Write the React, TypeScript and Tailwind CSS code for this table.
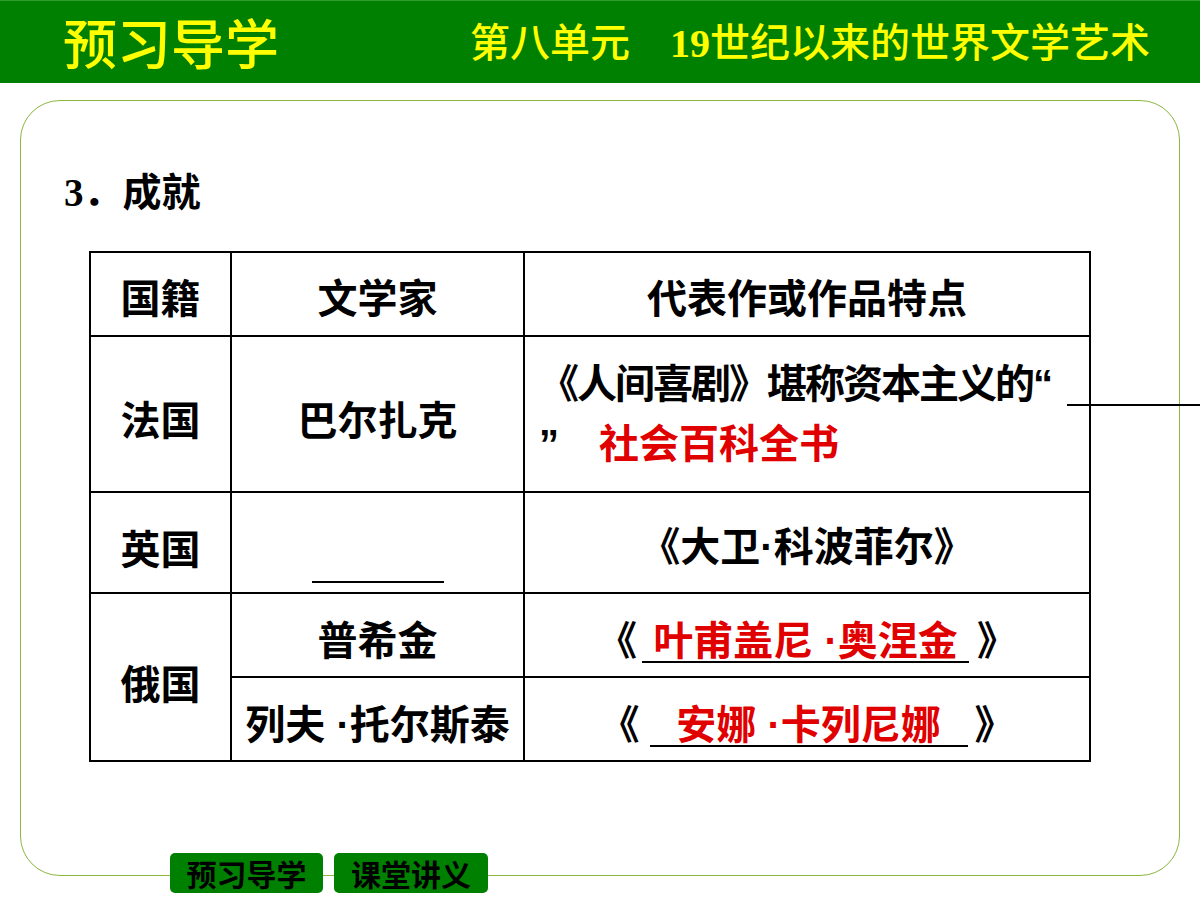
const cjk = "font-['Noto_Sans_CJK_SC','Liberation_Sans',sans-serif]";
const mixed = "font-['Liberation_Sans','Noto_Sans_CJK_SC',sans-serif]";

function Blank({ children, width }: { children?: React.ReactNode; width: string }) {
  return (
    <span
      className={`inline-block border-b-2 border-black text-center leading-[40px] text-[#e00000] ${width}`}
    >
      {children}
    </span>
  );
}

export default function App() {
  return (
    <div className={`flex h-[900px] w-[1200px] flex-col overflow-hidden bg-white ${cjk}`}>
      {/* top bar */}
      <header className="flex h-[83px] items-center border-t border-[#2f9e2f] bg-[#008000] text-[#ffff00]">
        <span className="pl-[63px] text-[54px] font-medium leading-none">预习导学</span>
        <div className="ml-auto flex items-baseline pr-[50px] text-[40px] font-medium leading-none">
          <span>第八单元</span>
          <span className="ml-[40px] font-['Liberation_Serif',serif] font-bold">19</span>
          <span>世纪以来的世界文学艺术</span>
        </div>
      </header>

      <div className="px-[20px] pt-[17px]">
        <div className="h-[776px] rounded-[40px] border-[1.5px] border-[#8db641] pl-[43px] pt-[68px]">
          <p className="flex items-baseline text-[39px] font-bold leading-[40px] text-black">
            <span className="font-['Liberation_Serif',serif]">3</span>
            <span>．成就</span>
          </p>

          <div
            className={`mt-[38px] ml-[25px] grid w-[1002px] grid-cols-[139px_291px_564px] grid-rows-[82px_154px_99px_82px_82px] gap-[2px] bg-black p-[2px] text-[40px] font-bold text-black ${mixed}`}
          >
            <div className="flex items-center justify-center bg-white pt-[10px]">国籍</div>
            <div className="flex items-center justify-center bg-white pt-[10px]">文学家</div>
            <div className="flex items-center justify-center bg-white pt-[10px]">代表作或作品特点</div>

            <div className="flex items-center justify-center bg-white pt-[14px]">法国</div>
            <div className="flex items-center justify-center bg-white pt-[14px]">巴尔扎克</div>
            <div className="flex flex-col justify-center bg-white pl-[14px] leading-[60px]">
              <div className="flex items-end whitespace-nowrap">
                <span className="tracking-[-2px]">《人间喜剧》堪称资本主义的“</span>
                <span className="mb-[8px] ml-[16px] inline-block w-[140px] shrink-0 border-b-2 border-black" />
              </div>
              <div className="flex whitespace-nowrap">
                <span>”</span>
                <span className="ml-[40px] text-[#e00000]">社会百科全书</span>
              </div>
            </div>

            <div className="flex items-center justify-center bg-white pt-[14px]">英国</div>
            <div className="flex items-end justify-center bg-white pb-[9px]">
              <span className="inline-block w-[132px] border-b-2 border-black" />
            </div>
            <div className="flex items-center justify-center bg-white pt-[8px]">《大卫·科波菲尔》</div>

            <div className="row-span-2 flex items-center justify-center bg-white pt-[16px]">俄国</div>
            <div className="flex items-center justify-center bg-white pt-[12px]">普希金</div>
            <div className="flex items-center justify-center bg-white pt-[12px]">
              <span>《</span>
              <span className="ml-[5px] mr-[8px]">
                <Blank width="w-[327px]">叶甫盖尼 ·奥涅金</Blank>
              </span>
              <span>》</span>
            </div>

            <div className="flex items-center justify-center bg-white pt-[12px]">列夫 ·托尔斯泰</div>
            <div className="flex items-center justify-center bg-white pt-[12px]">
              <span>《</span>
              <span className="ml-[10px] mr-[7px]">
                <Blank width="w-[318px]">安娜 ·卡列尼娜</Blank>
              </span>
              <span>》</span>
            </div>
          </div>
        </div>

        {/* bottom tabs */}
        <div className="-mt-[23px] flex gap-[11px] pl-[150px]">
          <div className="flex h-[40px] w-[153px] items-center justify-center rounded-[5px] bg-[#008000] text-[30px] font-bold leading-none text-black">
            预习导学
          </div>
          <div className="flex h-[40px] w-[154px] items-center justify-center rounded-[5px] bg-[#008000] text-[30px] font-bold leading-none text-black">
            课堂讲义
          </div>
        </div>
      </div>
    </div>
  );
}
